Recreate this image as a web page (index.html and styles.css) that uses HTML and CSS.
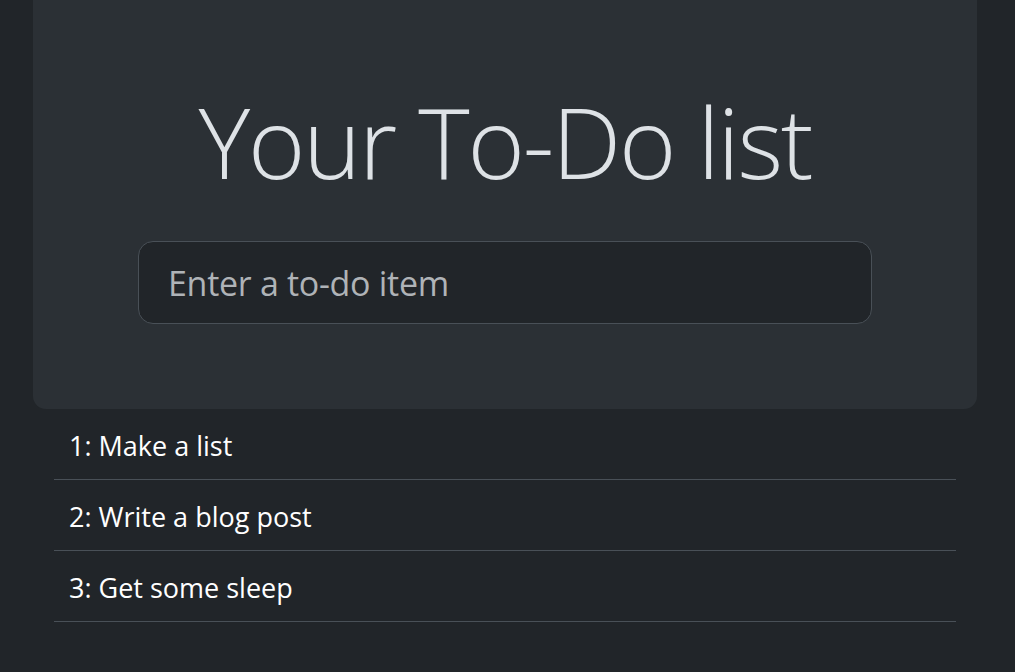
FILE: index.html
```html
<!DOCTYPE html>
<html lang="en">
<head>
<meta charset="utf-8">
<title>Your To-Do list</title>
<link rel="stylesheet" href="styles.css">
</head>
<body>
<main class="page">
  <section class="hero">
    <h1 class="hero-title">Your To-Do list</h1>
    <input class="todo-input" type="text" placeholder="Enter a to-do item">
  </section>
  <ul class="todo-list">
    <li class="todo-item">1: Make a list</li>
    <li class="todo-item">2: Write a blog post</li>
    <li class="todo-item">3: Get some sleep</li>
  </ul>
</main>
</body>
</html>
```

FILE: styles.css
```css
html, body {
  margin: 0;
  padding: 0;
  background: #212529;
}
body {
  font-family: "Open Sans", "Noto Sans", sans-serif;
  color: #dee2e6;
  height: 672px;
  overflow: hidden;
}
.page {
  width: 944px;
  margin-left: 33px;
}
.hero {
  margin-top: -12px;
  background: #2b3035;
  border-radius: 13px;
  padding: 93px 0 85px;
  display: flex;
  flex-direction: column;
  align-items: center;
}
.hero-title {
  margin: 0;
  font-weight: 300;
  font-size: 98px;
  letter-spacing: -2.2px;
  line-height: 120px;
  color: #dee2e6;
}
.todo-input {
  margin-top: 40px;
  box-sizing: border-box;
  width: 734px;
  height: 83px;
  padding: 0 29px;
  background: #212529;
  border: 1px solid #495057;
  border-radius: 15px;
  font-family: inherit;
  font-size: 34px;
  letter-spacing: -0.3px;
  line-height: 81px;
  color: #dee2e6;
  outline: none;
}
.todo-input::placeholder {
  color: #afb3b7;
}
.todo-list {
  list-style: none;
  margin: 0 21px;
  padding: 0;
}
.todo-item {
  height: 68px;
  box-sizing: content-box;
  padding: 2px 15px 0;
  border-bottom: 1px solid #495057;
  font-size: 27px;
  line-height: 70px;
  color: #ffffff;
}
```
